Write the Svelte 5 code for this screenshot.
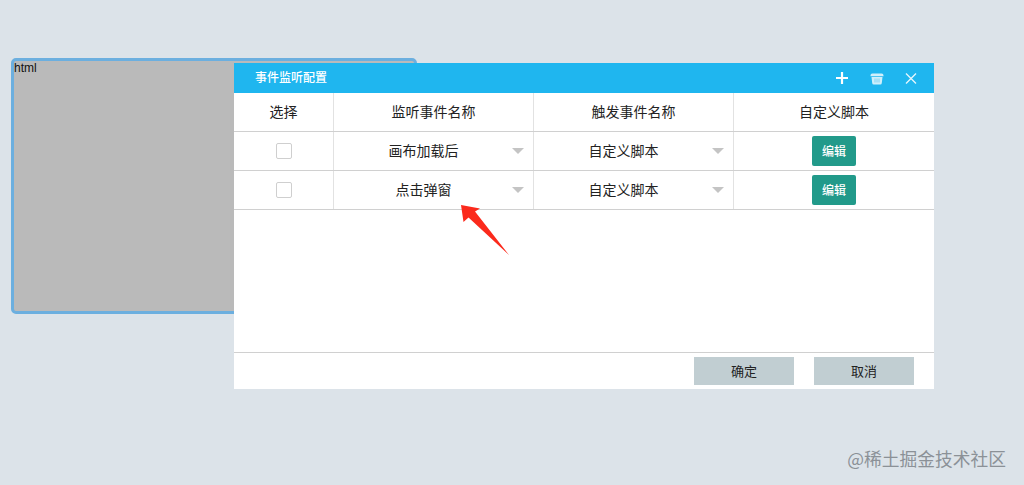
<script>
  const rows = [
    { listen: '画布加载后', trigger: '自定义脚本' },
    { listen: '点击弹窗', trigger: '自定义脚本' }
  ];
</script>

<div class="stage">
  <div class="widget">html</div>

  <div class="dialog">
    <div class="titlebar">
      <span class="title">事件监听配置</span>
      <div class="tools">
        <svg width="14" height="14" viewBox="0 0 14 14"><path d="M7 1v12M1 7h12" stroke="#fff" stroke-width="2.200" fill="none" /></svg>
        <svg width="14" height="14" viewBox="0 0 14 14"><path d="M.5 4.400q0-1.900 1.900-1.900h9.200q1.900 0 1.900 1.900v.8H.5zM1.500 6h11l-.7 6q-.1 1.500-1.500 1.500H3.700q-1.400 0-1.500-1.500z" fill="#cfeffb" /><path d="M5 7.500v4M7 7.500v4M9 7.500v4" stroke="#6ccdf3" stroke-width=".8" /></svg>
        <svg width="14" height="14" viewBox="0 0 14 14"><path d="M2 2.500l10 10M12 2.500l-10 10" stroke="#e4f6fd" stroke-width="1.400" fill="none" /></svg>
      </div>
    </div>

    <div class="table">
      <div class="row">
        <div class="cell">选择</div>
        <div class="cell">监听事件名称</div>
        <div class="cell">触发事件名称</div>
        <div class="cell">自定义脚本</div>
      </div>
      {#each rows as row}
        <div class="row">
          <div class="cell"><span class="check"></span></div>
          <div class="cell select"><span>{row.listen}</span><i class="caret"></i></div>
          <div class="cell select"><span>{row.trigger}</span><i class="caret"></i></div>
          <div class="cell"><button class="edit">编辑</button></div>
        </div>
      {/each}
    </div>

    <div class="footer">
      <button class="action">确定</button>
      <button class="action">取消</button>
    </div>
  </div>

  <svg class="arrow" width="52" height="60" viewBox="0 0 52 60">
    <path d="M1 4L3.500 21L8.500 16.500L49 54L15 10.500L20 7.500z" fill="#fb2a1c" />
  </svg>

  <div class="watermark">@稀土掘金技术社区</div>
</div>

<style>
  :global(body) {
    background: #dce3e9;
  }

  .stage {
    position: relative;
    height: 485px;
    overflow: hidden;
    background: #dce3e9;
    font-family: "Noto Sans CJK SC", "Liberation Sans", sans-serif;
    color: #222;
  }

  .widget {
    position: absolute;
    left: 11px;
    top: 58px;
    width: 400px;
    height: 250px;
    border: 3px solid #6cafdf;
    border-radius: 5px;
    background: #bababa;
    font-family: "Liberation Sans", sans-serif;
    font-size: 12px;
    line-height: 14px;
    color: #111;
  }

  .dialog {
    position: absolute;
    left: 234px;
    top: 63px;
    width: 700px;
    height: 326px;
    display: flex;
    flex-direction: column;
    background: #fff;
  }

  .titlebar {
    height: 30px;
    display: flex;
    align-items: center;
    justify-content: space-between;
    padding: 0 16px 0 21px;
    background: #1fb6ef;
    color: #fff;
    font-size: 12px;
  }

  .title {
    font-weight: 500;
    line-height: 28px;
    margin-top: -2px;
  }

  .tools {
    display: flex;
    align-items: center;
    gap: 20.500px;
  }

  .table {
    flex: 1;
  }

  .row {
    display: grid;
    grid-template-columns: 100px 200px 200px 200px;
    height: 39px;
    border-bottom: 1px solid #d0d0d0;
    box-sizing: border-box;
  }

  .cell {
    position: relative;
    display: flex;
    align-items: center;
    justify-content: center;
    padding-bottom: 2px;
    box-sizing: border-box;
    border-right: 1px solid #e2e2e2;
    font-size: 14px;
  }

  .cell:last-child {
    border-right: 0;
  }

  .select span {
    width: 152px;
    margin-right: 20px;
    text-align: center;
  }

  .caret {
    position: absolute;
    right: 9px;
    top: 16px;
    width: 0;
    height: 0;
    border-left: 6px solid transparent;
    border-right: 6px solid transparent;
    border-top: 6px solid #c4c4c4;
  }

  .check {
    width: 14px;
    height: 14px;
    margin-top: 2px;
    border: 1px solid #cfcfcf;
    border-radius: 2px;
    background: #fff;
  }

  .edit {
    width: 44px;
    height: 30px;
    margin-top: 2px;
    padding: 0 0 2px;
    border: 0;
    border-radius: 2px;
    background: #229a8a;
    color: #fff;
    font-family: inherit;
    font-size: 12px;
    font-weight: 500;
  }

  .footer {
    height: 37px;
    display: flex;
    justify-content: flex-end;
    gap: 20px;
    padding: 4px 20px 0 0;
    box-sizing: border-box;
    border-top: 1px solid #d0d0d0;
  }

  .action {
    width: 100px;
    height: 28px;
    padding: 0 0 2px;
    border: 0;
    background: #c1ced2;
    color: #222;
    font-family: inherit;
    font-size: 13px;
  }

  .arrow {
    position: absolute;
    left: 460px;
    top: 201px;
  }

  .watermark {
    position: absolute;
    right: 18px;
    top: 447px;
    font-size: 17.750px;
    line-height: 22px;
    color: #8b9197;
  }
</style>
